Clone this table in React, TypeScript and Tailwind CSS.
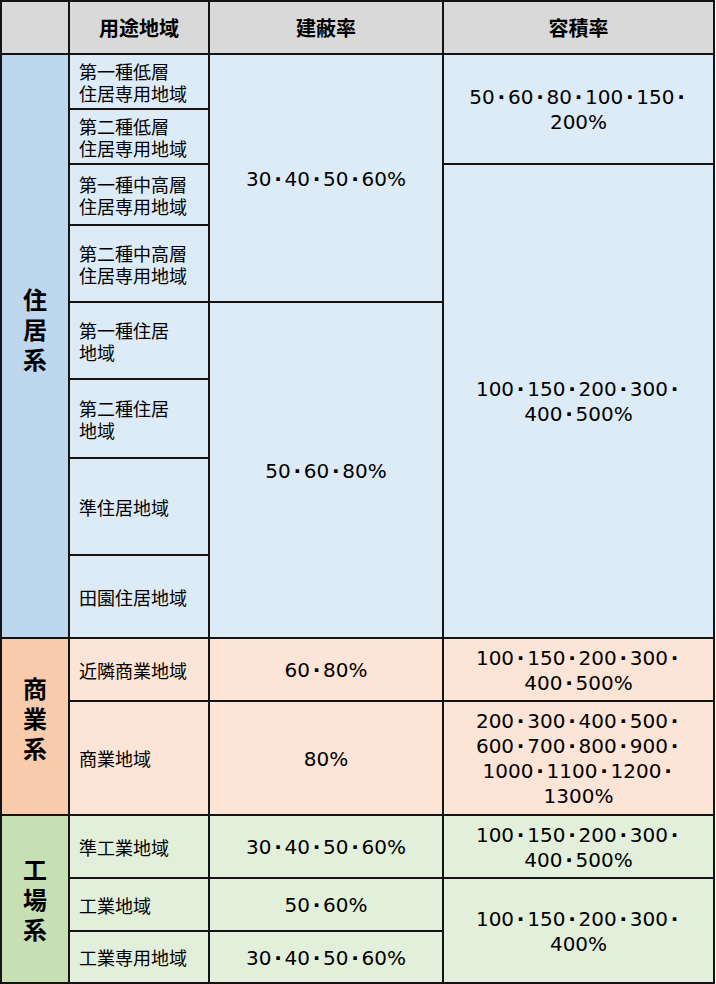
const BLUE_HEAD = "bg-[#bdd7ee]";
const BLUE = "bg-[#ddebf7]";
const ORANGE_HEAD = "bg-[#f8cbad]";
const ORANGE = "bg-[#fce4d6]";
const GREEN_HEAD = "bg-[#c6e0b4]";
const GREEN = "bg-[#e2efda]";

const Dot = () => <span className="px-[2.75px] font-bold">·</span>;

const Line = ({ text }: { text: string }) => {
  const parts = text.split("・");
  return (
    <div className="whitespace-nowrap">
      {parts.map((p, i) => (
        <span key={i}>
          {p}
          {i < parts.length - 1 && <Dot />}
        </span>
      ))}
    </div>
  );
};

const Rate = ({ lines, place, bg }: { lines: string[]; place: string; bg: string }) => (
  <div
    className={`${place} ${bg} flex flex-col items-center justify-center pt-[2px] text-center font-['DejaVu_Sans',sans-serif] text-[20px] leading-[25px] text-black`}
  >
    {lines.map((l) => (
      <Line key={l} text={l} />
    ))}
  </div>
);

const Zone = ({ lines, place, bg }: { lines: string[]; place: string; bg: string }) => (
  <div
    className={`${place} ${bg} flex flex-col justify-center pl-[9px] text-[18px] leading-[22px] text-black`}
  >
    {lines.map((l) => (
      <div key={l}>{l}</div>
    ))}
  </div>
);

const Group = ({ chars, place, bg }: { chars: string[]; place: string; bg: string }) => (
  <div
    className={`${place} ${bg} flex flex-col items-center justify-center text-[24px] font-bold leading-[30px] text-black`}
  >
    {chars.map((c) => (
      <div key={c}>{c}</div>
    ))}
  </div>
);

const Head = ({ label, place }: { label: string; place: string }) => (
  <div className={`${place} flex items-center justify-center bg-[#d9d9d9] text-[20px] font-bold text-black`}>
    {label}
  </div>
);

export default function App() {
  return (
    <div className="h-[984px] w-[716px] bg-white font-['Noto_Sans_CJK_JP',sans-serif]">
      <div className="grid w-[715px] grid-cols-[66px_138px_232px_269px] grid-rows-[51px_53px_53px_59px_75px_75px_77px_95px_81px_61px_112px_61px_51px_50px] gap-[2px] bg-[#141414] p-[2px]">
        <div className="col-start-1 row-start-1 bg-[#d9d9d9]" />
        <Head label="用途地域" place="col-start-2 row-start-1" />
        <Head label="建蔽率" place="col-start-3 row-start-1" />
        <Head label="容積率" place="col-start-4 row-start-1" />

        {/* 住居系 */}
        <Group chars={["住", "居", "系"]} place="col-start-1 row-start-2 row-span-8 pb-[34px]" bg={BLUE_HEAD} />
        <Zone lines={["第一種低層", "住居専用地域"]} place="col-start-2 row-start-2" bg={BLUE} />
        <Zone lines={["第二種低層", "住居専用地域"]} place="col-start-2 row-start-3" bg={BLUE} />
        <Zone lines={["第一種中高層", "住居専用地域"]} place="col-start-2 row-start-4" bg={BLUE} />
        <Zone lines={["第二種中高層", "住居専用地域"]} place="col-start-2 row-start-5" bg={BLUE} />
        <Zone lines={["第一種住居", "地域"]} place="col-start-2 row-start-6" bg={BLUE} />
        <Zone lines={["第二種住居", "地域"]} place="col-start-2 row-start-7" bg={BLUE} />
        <Zone lines={["準住居地域"]} place="col-start-2 row-start-8" bg={BLUE} />
        <Zone lines={["田園住居地域"]} place="col-start-2 row-start-9" bg={BLUE} />
        <Rate lines={["30・40・50・60%"]} place="col-start-3 row-start-2 row-span-4" bg={BLUE} />
        <Rate lines={["50・60・80%"]} place="col-start-3 row-start-6 row-span-4" bg={BLUE} />
        <Rate lines={["50・60・80・100・150・", "200%"]} place="col-start-4 row-start-2 row-span-2" bg={BLUE} />
        <Rate lines={["100・150・200・300・", "400・500%"]} place="col-start-4 row-start-4 row-span-6" bg={BLUE} />

        {/* 商業系 */}
        <Group chars={["商", "業", "系"]} place="col-start-1 row-start-10 row-span-2 pb-[18px]" bg={ORANGE_HEAD} />
        <Zone lines={["近隣商業地域"]} place="col-start-2 row-start-10" bg={ORANGE} />
        <Zone lines={["商業地域"]} place="col-start-2 row-start-11" bg={ORANGE} />
        <Rate lines={["60・80%"]} place="col-start-3 row-start-10" bg={ORANGE} />
        <Rate lines={["80%"]} place="col-start-3 row-start-11" bg={ORANGE} />
        <Rate lines={["100・150・200・300・", "400・500%"]} place="col-start-4 row-start-10" bg={ORANGE} />
        <Rate
          lines={["200・300・400・500・", "600・700・800・900・", "1000・1100・1200・", "1300%"]}
          place="col-start-4 row-start-11"
          bg={ORANGE}
        />

        {/* 工場系 */}
        <Group chars={["工", "場", "系"]} place="col-start-1 row-start-12 row-span-3" bg={GREEN_HEAD} />
        <Zone lines={["準工業地域"]} place="col-start-2 row-start-12" bg={GREEN} />
        <Zone lines={["工業地域"]} place="col-start-2 row-start-13" bg={GREEN} />
        <Zone lines={["工業専用地域"]} place="col-start-2 row-start-14" bg={GREEN} />
        <Rate lines={["30・40・50・60%"]} place="col-start-3 row-start-12" bg={GREEN} />
        <Rate lines={["50・60%"]} place="col-start-3 row-start-13" bg={GREEN} />
        <Rate lines={["30・40・50・60%"]} place="col-start-3 row-start-14" bg={GREEN} />
        <Rate lines={["100・150・200・300・", "400・500%"]} place="col-start-4 row-start-12" bg={GREEN} />
        <Rate lines={["100・150・200・300・", "400%"]} place="col-start-4 row-start-13 row-span-2" bg={GREEN} />
      </div>
    </div>
  );
}
